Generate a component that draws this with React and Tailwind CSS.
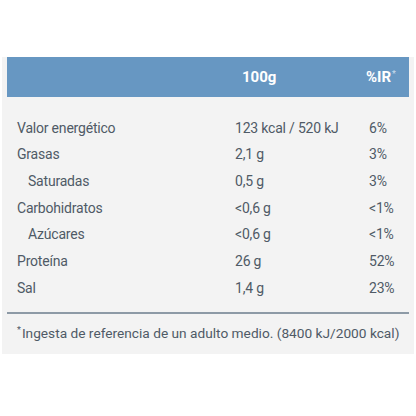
const rows = [
  { name: 'Valor energético', qty: '123 kcal / 520 kJ', ir: '6%' },
  { name: 'Grasas', qty: '2,1 g', ir: '3%' },
  { name: 'Saturadas', qty: '0,5 g', ir: '3%', sub: true },
  { name: 'Carbohidratos', qty: '<0,6 g', ir: '<1%' },
  { name: 'Azúcares', qty: '<0,6 g', ir: '<1%', sub: true },
  { name: 'Proteína', qty: '26 g', ir: '52%' },
  { name: 'Sal', qty: '1,4 g', ir: '23%' },
];

export default function App() {
  return (
    <div className="w-[416px] h-[416px] bg-white pt-[57px] font-['Roboto',sans-serif] text-[#4f5a66]">
      <div className="mx-[2px] bg-[#f3f3f3]">
        <div className="mx-[5px] h-[40px] bg-[#6797c2] flex items-center text-white font-bold text-[15px] leading-none">
          <span className="ml-[235px] w-[124px]">100g</span>
          <span className="flex items-start">
            %IR<span className="text-[9px] text-[#c9dced] font-normal ml-[1px]">*</span>
          </span>
        </div>

        <div className="mx-[5px] pt-[18px] pb-[10px] border-b-2 border-[#8d9aa6]">
          {rows.map((r) => (
            <div key={r.name} className="h-[26.67px] flex items-center text-[14px] tracking-[-0.2px]">
              <span className={r.sub ? 'w-[228px] pl-[21px]' : 'w-[228px] pl-[10px]'}>{r.name}</span>
              <span className="w-[134px]">{r.qty}</span>
              <span>{r.ir}</span>
            </div>
          ))}
        </div>

        <div className="h-[40px] pl-[15px] flex items-center text-[13.7px] leading-none">
          <span className="text-[9px] self-start mt-[12px] mr-[1px]">*</span>
          <span>Ingesta de referencia de un adulto medio. (8400 kJ/2000 kcal)</span>
        </div>
      </div>
    </div>
  );
}
